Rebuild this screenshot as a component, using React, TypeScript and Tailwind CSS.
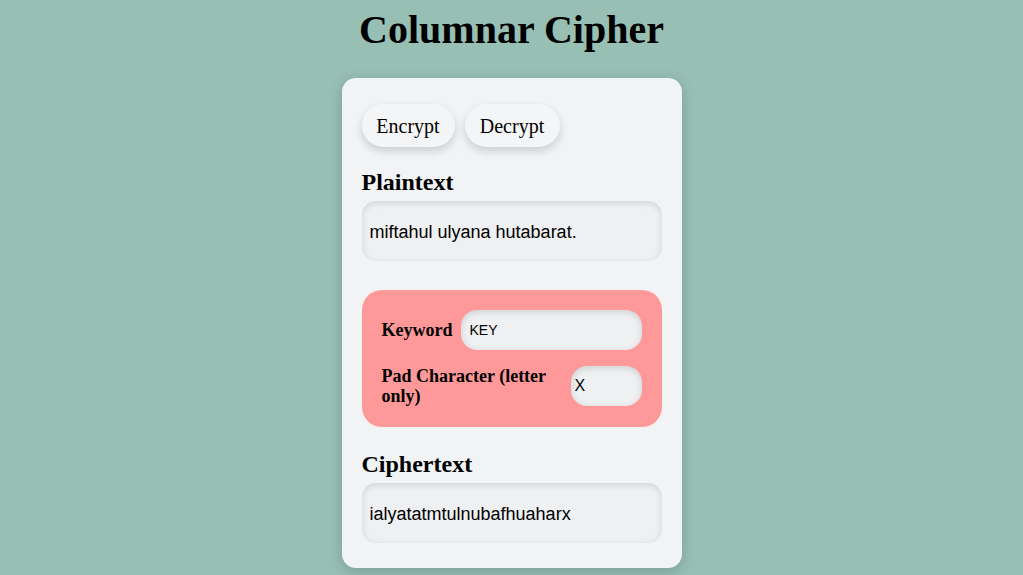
import { useState } from "react";

const serif = "font-['Times_New_Roman','Liberation_Serif',serif]";
const sans = "font-['Arial','Liberation_Sans',sans-serif]";

export default function App() {
  const [mode, setMode] = useState<"encrypt" | "decrypt">("encrypt");
  const [plain, setPlain] = useState("miftahul ulyana hutabarat.");
  const [key, setKey] = useState("KEY");
  const [pad, setPad] = useState("X");

  return (
    <div className={`min-h-[575px] bg-[#97bfb4] pt-[7px] text-black ${serif}`}>
      <h1 className="text-center text-[40px] font-bold leading-[46px]">Columnar Cipher</h1>

      <div className="mx-auto mt-[25px] w-[340px] rounded-[14px] bg-[#f2f3f5] px-5 pt-[26px] pb-[25px] shadow-[0_3px_14px_rgba(0,0,0,0.18)]">
        <div className="flex gap-[10px]">
          <button
            type="button"
            onClick={() => setMode("encrypt")}
            className="h-[43px] w-[93px] rounded-full bg-[#f4f5f6] text-[20px] shadow-[0_4px_9px_rgba(0,0,0,0.16)]"
          >
            Encrypt
          </button>
          <button
            type="button"
            onClick={() => setMode("decrypt")}
            className="h-[43px] w-[95px] rounded-full bg-[#f4f5f6] text-[20px] shadow-[0_4px_9px_rgba(0,0,0,0.16)]"
          >
            Decrypt
          </button>
        </div>

        <h2 className="mt-[22px] mb-[6px] text-[24px] font-bold leading-[26px]">
          {mode === "encrypt" ? "Plaintext" : "Ciphertext"}
        </h2>
        <div className="flex h-[60px] items-center rounded-[14px] bg-[#eff0f2] px-2 shadow-[inset_0_2px_7px_rgba(0,0,0,0.12)]">
          <input
            value={plain}
            onChange={(e) => setPlain(e.target.value)}
            className={`w-full bg-transparent pt-[2px] text-[18px] outline-none ${sans}`}
          />
        </div>

        <div className="mt-[29px] flex flex-col gap-4 rounded-[20px] bg-[#ff9999] px-5 pt-5 pb-[21px]">
          <div className="flex items-center gap-2">
            <label className="text-[18px] font-bold">Keyword</label>
            <input
              value={key}
              onChange={(e) => setKey(e.target.value)}
              className={`h-10 min-w-0 flex-1 rounded-[16px] bg-[#eff0f2] pl-[9px] text-[14px] shadow-[inset_0_2px_7px_rgba(0,0,0,0.14)] outline-none ${sans}`}
            />
          </div>
          <div className="flex items-center gap-2">
            <label className="flex-1 text-[18px] font-bold leading-[20px]">Pad Character (letter only)</label>
            <input
              value={pad}
              onChange={(e) => setPad(e.target.value)}
              maxLength={1}
              className={`h-10 w-[71px] rounded-[16px] bg-[#eff0f2] pl-[4px] text-[16px] shadow-[inset_0_2px_7px_rgba(0,0,0,0.14)] outline-none ${sans}`}
            />
          </div>
        </div>

        <h2 className="mt-[24px] mb-[6px] text-[24px] font-bold leading-[26px]">
          {mode === "encrypt" ? "Ciphertext" : "Plaintext"}
        </h2>
        <div className="flex h-[60px] items-center rounded-[14px] bg-[#eff0f2] px-2 shadow-[inset_0_2px_7px_rgba(0,0,0,0.12)]">
          <span className={`pt-[2px] text-[18px] ${sans}`}>ialyatatmtulnubafhuaharx</span>
        </div>
      </div>
    </div>
  );
}
